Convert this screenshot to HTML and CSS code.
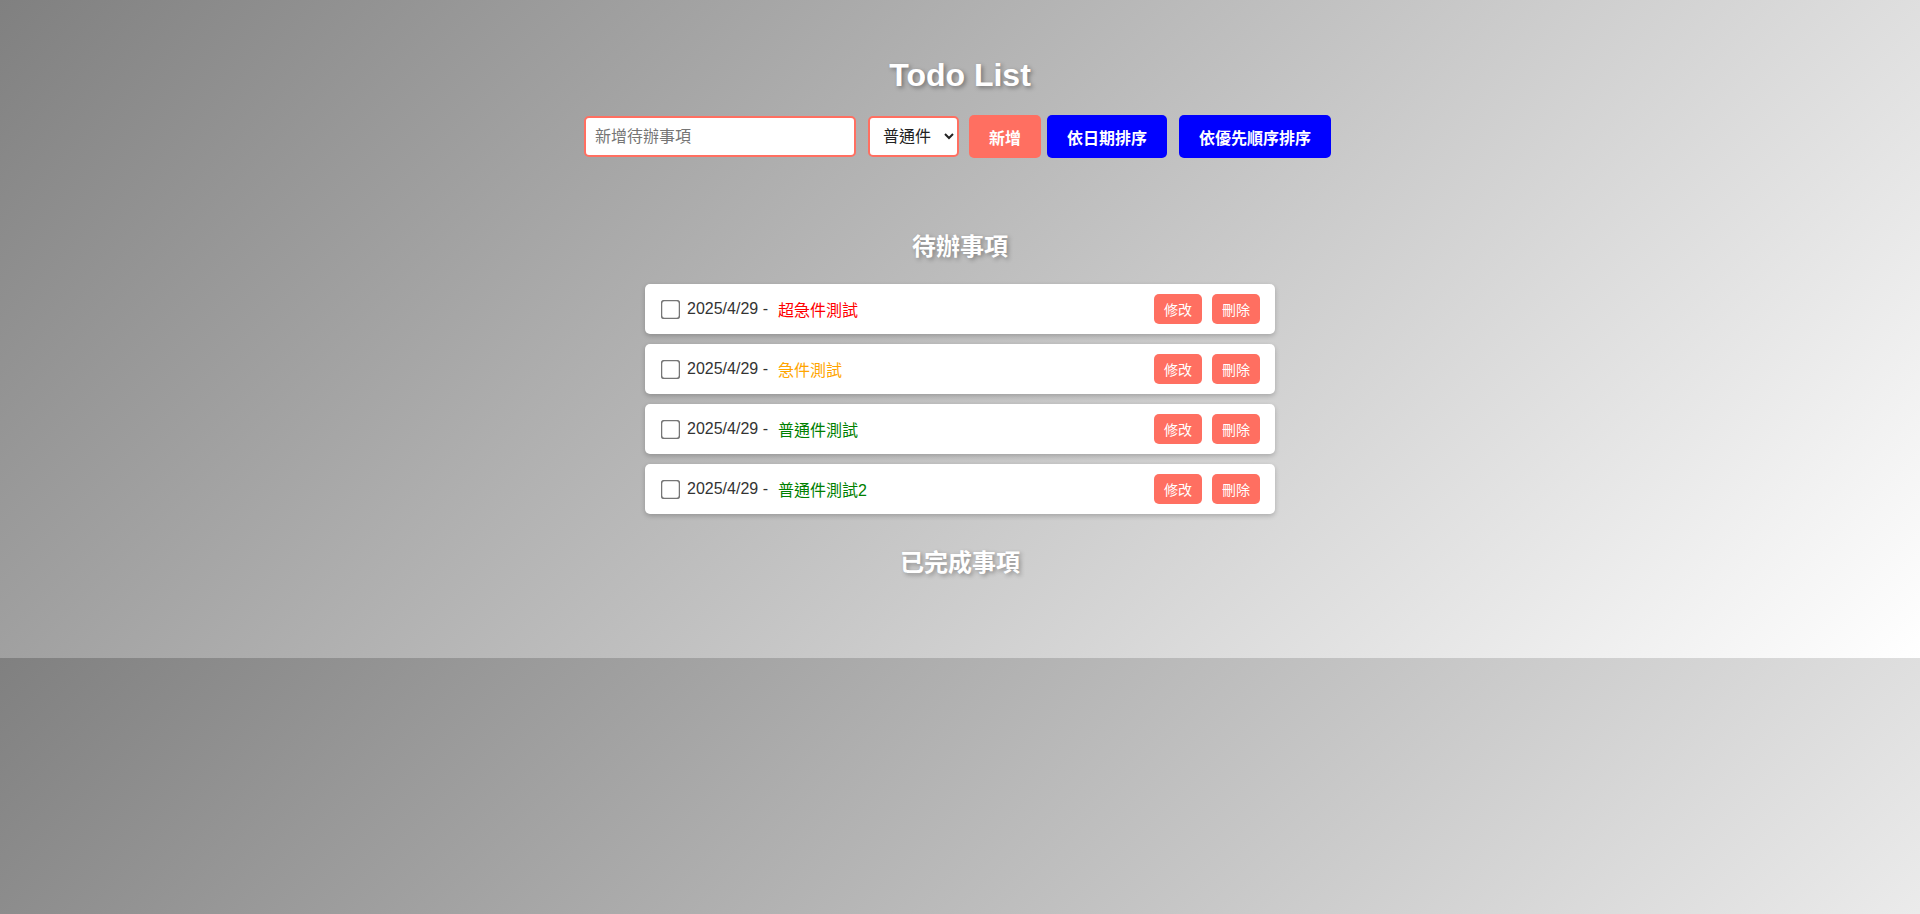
FILE: index.html
```html
<!DOCTYPE html>
<html lang="zh-Hant">
<head>
<meta charset="utf-8">
<title>Todo List</title>
<link rel="stylesheet" href="styles.css">
</head>
<body>
<div class="app">
  <h1 class="title">Todo List</h1>
  <div class="controls">
    <input class="task-input" type="text" placeholder="新增待辦事項">
    <select class="priority">
      <option>普通件</option>
      <option>急件</option>
      <option>超急件</option>
    </select>
    <button class="btn-add">新增</button>
    <button class="btn-sort btn-sort-date">依日期排序</button>
    <button class="btn-sort btn-sort-priority">依優先順序排序</button>
  </div>

  <h2 class="section-title section-pending">待辦事項</h2>
  <ul class="todo-list">
    <li class="todo-item">
      <input class="todo-check" type="checkbox">
      <span class="todo-date">2025/4/29 -</span>
      <span class="todo-text urgent2">超急件測試</span>
      <div class="todo-actions">
        <button class="btn-small">修改</button>
        <button class="btn-small">刪除</button>
      </div>
    </li>
    <li class="todo-item">
      <input class="todo-check" type="checkbox">
      <span class="todo-date">2025/4/29 -</span>
      <span class="todo-text urgent1">急件測試</span>
      <div class="todo-actions">
        <button class="btn-small">修改</button>
        <button class="btn-small">刪除</button>
      </div>
    </li>
    <li class="todo-item">
      <input class="todo-check" type="checkbox">
      <span class="todo-date">2025/4/29 -</span>
      <span class="todo-text normal">普通件測試</span>
      <div class="todo-actions">
        <button class="btn-small">修改</button>
        <button class="btn-small">刪除</button>
      </div>
    </li>
    <li class="todo-item">
      <input class="todo-check" type="checkbox">
      <span class="todo-date">2025/4/29 -</span>
      <span class="todo-text normal">普通件測試2</span>
      <div class="todo-actions">
        <button class="btn-small">修改</button>
        <button class="btn-small">刪除</button>
      </div>
    </li>
  </ul>

  <h2 class="section-title section-done">已完成事項</h2>
  <ul class="todo-list done-list"></ul>
</div>
</body>
</html>
```

FILE: styles.css
```css
html, body {
  margin: 0;
  padding: 0;
}

body {
  font-family: "Liberation Sans", Arial, "Noto Sans CJK TC", sans-serif;
  background: linear-gradient(135deg, #808080, #ffffff);
}

.app {
  box-sizing: border-box;
  height: 658px;
  padding-top: 57px;
  text-align: center;
}

.title {
  margin: 0;
  font-size: 32px;
  line-height: 37px;
  font-weight: bold;
  color: #ffffff;
  text-shadow: 2px 2px 4px rgba(0, 0, 0, 0.35);
}

.controls {
  margin-top: 21px;
  height: 43px;
  display: flex;
  justify-content: center;
  align-items: center;
  padding-right: 5px;
}

.task-input {
  box-sizing: border-box;
  width: 272px;
  height: 41px;
  padding: 0 9px;
  border: 2px solid #ff6f61;
  border-radius: 5px;
  font-family: "Liberation Sans", Arial, "Noto Sans CJK TC", sans-serif;
  font-size: 16px;
  background: #ffffff;
  outline: none;
}

.task-input::placeholder {
  color: #757575;
}

.priority {
  box-sizing: border-box;
  width: 91px;
  height: 41px;
  margin-left: 12px;
  padding: 0 6px 0 9px;
  border: 2px solid #ff6f61;
  border-radius: 5px;
  background: #ffffff;
  color: #222222;
  font-family: "Liberation Sans", Arial, "Noto Sans CJK TC", sans-serif;
  font-size: 16px;
}

.btn-add,
.btn-sort {
  box-sizing: border-box;
  height: 43px;
  padding: 0 20px;
  border: none;
  border-radius: 5px;
  color: #ffffff;
  font-family: "Liberation Sans", Arial, "Noto Sans CJK TC", sans-serif;
  font-size: 16px;
  cursor: pointer;
}

.btn-add {
  margin-left: 10px;
  background: #ff6f61;
  font-weight: bold;
}

.btn-sort {
  background: #0000ff;
  font-weight: bold;
}

.btn-sort-date {
  margin-left: 6px;
}

.btn-sort-priority {
  margin-left: 12px;
}

.section-title {
  margin: 0;
  font-size: 24px;
  line-height: 30px;
  font-weight: bold;
  color: #ffffff;
  text-shadow: 2px 2px 4px rgba(0, 0, 0, 0.3);
}

.section-pending {
  margin-top: 74px;
}

.section-done {
  margin-top: 34px;
}

.todo-list {
  list-style: none;
  width: 630px;
  margin: 22px auto 0;
  padding: 0;
  display: flex;
  flex-direction: column;
  gap: 10px;
}

.done-list {
  margin-top: 20px;
}

.todo-item {
  box-sizing: border-box;
  height: 50px;
  display: flex;
  align-items: center;
  padding: 10px 15px;
  background: #ffffff;
  border-radius: 5px;
  box-shadow: 0 2px 5px rgba(0, 0, 0, 0.2);
  text-align: left;
}

.todo-check {
  margin: 3px 10px 3px 4px;
  transform: scale(1.5);
}

.todo-date {
  font-size: 16px;
  color: #333333;
  margin-right: 10px;
}

.todo-text {
  font-size: 16px;
}

.urgent2 { color: #ff0000; }
.urgent1 { color: #ffa500; }
.normal { color: #008000; }

.todo-actions {
  margin-left: auto;
  display: flex;
  gap: 10px;
}

.btn-small {
  box-sizing: border-box;
  height: 30px;
  padding: 0 10px;
  border: none;
  border-radius: 5px;
  background: #ff6f61;
  color: #ffffff;
  font-family: "Liberation Sans", Arial, "Noto Sans CJK TC", sans-serif;
  font-size: 14px;
  cursor: pointer;
}
```
